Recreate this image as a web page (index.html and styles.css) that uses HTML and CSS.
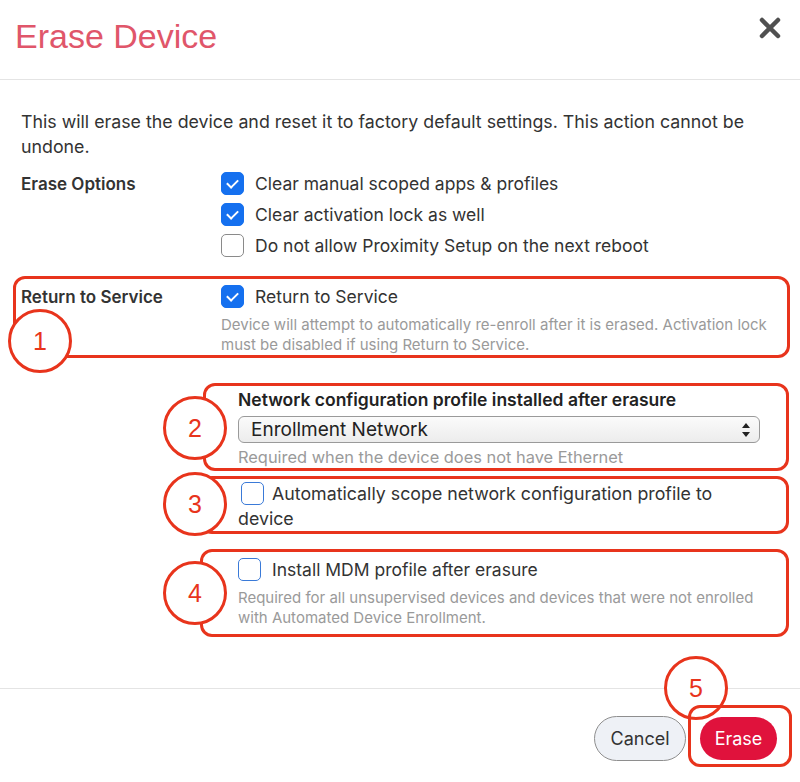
FILE: index.html
```html
<!DOCTYPE html>
<html lang="en">
<head>
    <meta charset="UTF-8">
    <meta name="viewport" content="width=device-width, initial-scale=1.0">
    <title>Erase Device</title>
    <link rel="stylesheet" href="styles.css">
</head>
<body>
    <div class="modal">
        <div class="modal-header">
            <h1>Erase Device</h1>
            <span class="close-button">
                <svg width="22" height="22" viewBox="0 0 22 22"><path d="M3 3 L19 19 M19 3 L3 19" stroke="#505050" stroke-width="4.5" stroke-linecap="round"/></svg>
            </span>
        </div>

        <div class="modal-body">
            <p class="intro">This will erase the device and reset it to factory default settings. This action cannot be undone.</p>

            <div class="field-row">
                <div class="field-label">Erase Options</div>
                <div class="options">
                    <label class="option"><span class="check checked"></span>Clear manual scoped apps &amp; profiles</label>
                    <label class="option"><span class="check checked"></span>Clear activation lock as well</label>
                    <label class="option"><span class="check"></span>Do not allow Proximity Setup on the next reboot</label>
                </div>
            </div>

            <div class="callout callout-rts">
                <div class="field-row">
                    <div class="field-label">Return to Service</div>
                    <div class="options">
                        <label class="option"><span class="check checked"></span>Return to Service</label>
                        <p class="help">Device will attempt to automatically re-enroll after it is erased. Activation lock must be disabled if using Return to Service.</p>
                    </div>
                </div>
                <span class="marker marker-1">1</span>
            </div>

            <div class="callout callout-network">
                <div class="sub-title">Network configuration profile installed after erasure</div>
                <div class="select-box">
                    <span>Enrollment Network</span>
                    <svg width="10" height="16" viewBox="0 0 10 16"><path d="M5 1 L9 6 L1 6 Z M5 15 L9 10 L1 10 Z" fill="#222"/></svg>
                </div>
                <p class="help help-large">Required when the device does not have Ethernet</p>
                <span class="marker marker-2">2</span>
            </div>

            <div class="callout callout-scope">
                <p class="wrap-option"><span class="check outline"></span>Automatically scope network configuration profile to device</p>
                <span class="marker marker-3">3</span>
            </div>

            <div class="callout callout-mdm">
                <label class="option"><span class="check outline"></span>Install MDM profile after erasure</label>
                <p class="help">Required for all unsupervised devices and devices that were not enrolled with Automated Device Enrollment.</p>
                <span class="marker marker-4">4</span>
            </div>
        </div>

        <div class="modal-footer">
            <button type="button" class="btn btn-cancel">Cancel</button>
            <button type="button" class="btn btn-erase">Erase</button>
            <span class="marker marker-5">5</span>
            <span class="erase-ring"></span>
        </div>
    </div>
</body>
</html>
```

FILE: styles.css
```css
body {
    margin: 0;
    background: #fff;
    font-family: Inter, "Noto Sans", sans-serif;
    color: #333;
}

.modal {
    width: 800px;
    height: 782px;
    overflow: hidden;
    position: relative;
}

.modal-header {
    height: 80px;
    border-bottom: 1px solid #e4e4e4;
    display: flex;
    justify-content: space-between;
    align-items: flex-start;
    box-sizing: border-box;
}

h1 {
    margin: 0;
    padding: 16px 0 0 15px;
    font-family: "Liberation Sans", Arial, sans-serif;
    font-size: 34px;
    line-height: 40px;
    font-weight: normal;
    color: #e0566a;
}

.close-button {
    margin: 17px 19px 0 0;
}

.modal-body {
    padding-top: 29px;
}

.intro {
    margin: 0 0 0 21px;
    width: 765px;
    font-size: 17.8px;
    line-height: 25px;
}

.field-row {
    display: grid;
    grid-template-columns: 200px 1fr;
    margin-left: 21px;
}

.intro + .field-row {
    margin-top: 13px;
}

.field-label {
    font-size: 17px;
    font-weight: 600;
    line-height: 23px;
    padding-top: 1px;
    color: #333;
}

.options {
    display: flex;
    flex-direction: column;
    gap: 8px;
}

.option {
    display: flex;
    align-items: center;
    gap: 11px;
    font-size: 17.5px;
    line-height: 23px;
}

.check {
    width: 23px;
    height: 23px;
    box-sizing: border-box;
    border: 1.5px solid #8a8a8a;
    border-radius: 5px;
    flex-shrink: 0;
    display: inline-block;
    position: relative;
    background: #fff;
}

.check.checked {
    background: #1570ef;
    border-color: #1570ef;
}

.check.checked::after {
    content: "";
    position: absolute;
    left: 7px;
    top: 4px;
    width: 5px;
    height: 9px;
    border: solid #fff;
    border-width: 0 2.5px 2.5px 0;
    transform: rotate(45deg);
}

.check.outline {
    border-color: #3a7ad8;
}

.help {
    margin: 0;
    font-size: 15px;
    line-height: 20px;
    color: #9a9a9a;
}

.help-large {
    font-size: 16.4px;
}

/* annotation callouts */
.callout {
    border: 3px solid #e8341c;
    border-radius: 12px;
    position: relative;
    background: #fff;
}

.callout-rts {
    margin: 19px 10px 0 13px;
    padding: 6px 0 0 0;
}

.callout-rts .field-row {
    margin-left: 5px;
}

.callout-rts .options {
    gap: 7px;
}

.callout-network {
    margin: 25px 11px 0 203px;
    padding: 4px 26px 1px 32px;
}

.sub-title {
    font-size: 17.5px;
    font-weight: 600;
    line-height: 20px;
    color: #222;
}

.select-box {
    margin: 6px 0 4px 0;
    height: 27px;
    border: 1px solid #9a9a9a;
    border-radius: 6px;
    background: linear-gradient(#fbfbfb, #ececec);
    display: flex;
    align-items: center;
    justify-content: space-between;
    padding: 0 8px 0 12px;
    font-size: 19px;
    color: #222;
    box-sizing: border-box;
}

.callout-scope {
    margin: 5px 11px 0 200px;
    padding: 2px 50px 0 35px;
}

.wrap-option {
    margin: 0;
    font-size: 17.8px;
    line-height: 25px;
}

.wrap-option .check {
    vertical-align: -5px;
    margin: 0 8px 0 3px;
}

.callout-mdm {
    margin: 15px 11px 0 200px;
    padding: 6px 20px 6px 35px;
}

.callout-mdm .option {
    margin-bottom: 7px;
}

.marker {
    position: absolute;
    width: 58px;
    height: 58px;
    border: 3px solid #e8341c;
    border-radius: 50%;
    background: #fff;
    color: #e8341c;
    font-family: "Liberation Sans", Arial, sans-serif;
    font-size: 25px;
    display: flex;
    align-items: center;
    justify-content: center;
}

.marker-1 { left: -8px; top: 30px; }
.marker-2 { left: -43px; top: 10px; }
.marker-3 { left: -40px; top: -7px; }
.marker-4 { left: -40px; top: 9px; }
.marker-5 { left: 664px; top: -33px; }

/* footer */
.modal-footer {
    position: absolute;
    left: 0;
    right: 0;
    top: 688px;
    bottom: 0;
    border-top: 1px solid #e4e4e4;
    display: flex;
    justify-content: flex-end;
    align-items: flex-start;
    padding: 27px 23px 0 0;
    gap: 14px;
}

.btn {
    font-family: Inter, "Noto Sans", sans-serif;
    font-size: 18px;
    border-radius: 23px;
    cursor: pointer;
}

.btn-cancel {
    width: 92px;
    height: 45px;
    background: #eef1f6;
    border: 1px solid #8e8e8e;
    color: #333;
}

.btn-erase {
    width: 77px;
    height: 43px;
    margin-top: 1px;
    background: #e0123c;
    border: none;
    color: #fff;
}

.erase-ring {
    position: absolute;
    left: 688px;
    top: 16px;
    width: 104px;
    height: 62px;
    box-sizing: border-box;
    border: 3px solid #e8341c;
    border-radius: 12px;
}
```
